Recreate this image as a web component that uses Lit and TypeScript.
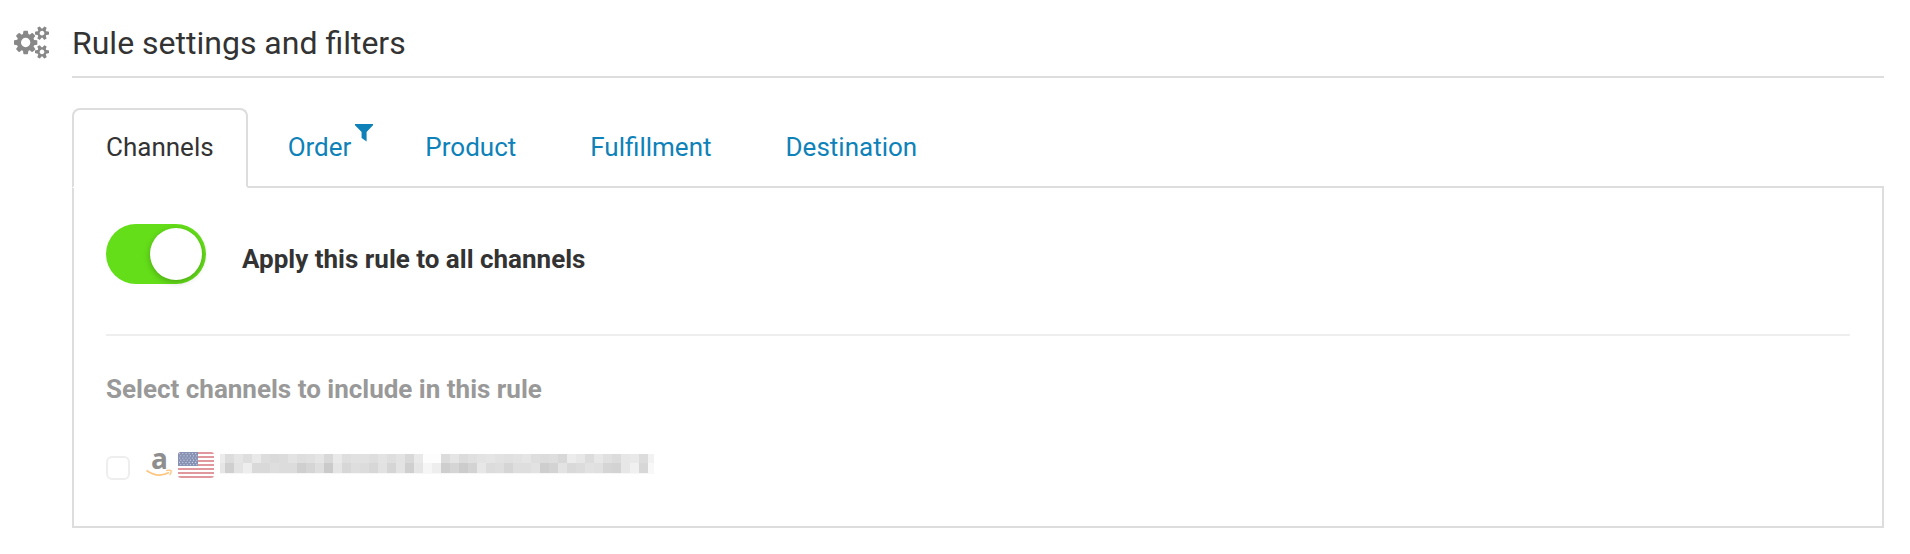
import { LitElement, html, svg, css } from "lit";
import { customElement, state } from "lit/decorators.js";

interface Tab {
  id: string;
  label: string;
  filtered?: boolean;
}

const TABS: Tab[] = [
  { id: "channels", label: "Channels" },
  { id: "order", label: "Order", filtered: true },
  { id: "product", label: "Product" },
  { id: "fulfillment", label: "Fulfillment" },
  { id: "destination", label: "Destination" },
];

// Grey levels (hex byte) of the redacted channel name, one row of blocks each.
const MASK_ROWS = [
  "ec dc e5 de e9 dd da dc e3 de e0 e5 d8 e9 de e1 e1 de e3 de e3 d8 e9 fd fd dc e5 dc e0 e3 e5 e2 e0 e2 e5 de dc de d8 ec e7 dc e7 e0 dc e7 e9 dc f2",
  "e6 cf e3 ee d9 d9 de dc dc cf d5 de ca e5 d7 de dc d7 e2 d5 e3 cf e5 f6 ee ce d5 cc d3 e7 dc de d5 de de e2 ce d3 e3 d9 dc e2 e0 d5 d3 e7 f0 d7 f8",
].map((row) => row.split(" "));
const MASK_CELL = 9;
const MASK_LEAD = 5;

@customElement("masked-name")
export class MaskedName extends LitElement {
  static styles = css`
    :host {
      display: block;
    }
    .mask {
      display: block;
    }
  `;

  render() {
    return html`<svg class="mask" width="434" height="20" viewBox="0 0 434 20" shape-rendering="crispEdges" aria-hidden="true">
      ${MASK_ROWS.map((row, r) =>
        row.map((level, i) => {
          const x = i === 0 ? 0 : MASK_LEAD + (i - 1) * MASK_CELL;
          const w = i === 0 ? MASK_LEAD : MASK_CELL;
          return svg`<rect x=${x} y=${r * MASK_CELL} width=${w} height=${r ? 10 : 9} fill=${"#" + level.repeat(3)}></rect>`;
        })
      )}
      <rect y="19" width="434" height="1" fill="#f7f7f7"></rect>
    </svg>`;
  }
}

@customElement("app-root")
export class AppRoot extends LitElement {
  @state() private active = "channels";
  @state() private allChannels = true;

  static styles = css`
    :host {
      display: block;
      color: #333;
      font-family: Roboto, "Liberation Sans", sans-serif;
      font-size: 26px;
      line-height: 36px;
    }
    .section {
      display: grid;
      grid-template-columns: 36px minmax(0, 1fr);
      column-gap: 22px;
      padding: 20px 26px 26px 14px;
    }
    .gears {
      display: block;
      margin-top: 6px;
      fill: #888;
    }
    .title {
      margin: 0 0 30px;
      padding: 1px 0 11px;
      border-bottom: 2px solid #ddd;
      font-size: 32px;
      font-weight: 400;
      line-height: 44px;
    }
    .tabs {
      display: flex;
      gap: 6px;
      border-bottom: 2px solid #ddd;
    }
    .tab {
      position: relative;
      margin: 0 0 -2px;
      padding: 19px 32px 21px;
      border: 2px solid transparent;
      border-radius: 8px 8px 0 0;
      background: none;
      color: #0e82b8;
      font: inherit;
      cursor: pointer;
    }
    .tab.active {
      border-color: #ddd #ddd #fff;
      background: #fff;
      color: #333;
    }
    .funnel {
      position: absolute;
      top: 14px;
      right: 10px;
      fill: currentColor;
    }
    .panel {
      padding: 36px 32px 46px;
      border: 2px solid #ddd;
      border-top: 0;
    }
    .apply {
      display: flex;
      align-items: center;
      gap: 36px;
      padding-bottom: 50px;
      border-bottom: 2px solid #eee;
    }
    .switch {
      appearance: none;
      flex: none;
      width: 100px;
      height: 60px;
      margin: 0;
      padding: 4px;
      border-radius: 30px;
      background: #ddd;
      cursor: pointer;
    }
    .switch::before {
      content: "";
      display: block;
      width: 52px;
      height: 52px;
      border-radius: 50%;
      background: #fff;
      box-shadow: 0 2px 6px rgba(0, 0, 0, 0.25);
    }
    .switch:checked {
      background: #64de19;
    }
    .switch:checked::before {
      margin-left: auto;
    }
    .apply-label {
      padding-top: 10px;
      font-weight: 700;
    }
    .channels {
      margin: 0;
      padding: 0;
      border: 0;
    }
    .legend {
      padding: 35px 0 0;
      color: #999;
      font-weight: 700;
    }
    .channel {
      display: flex;
      align-items: flex-start;
      margin-top: 45px;
    }
    .check {
      appearance: none;
      width: 24px;
      height: 24px;
      margin: 4px 16px 0 0;
      border: 2px solid #eee;
      border-radius: 6px;
      background: #fff;
    }
    .check:checked {
      background: #0e82b8;
    }
    .channel-label {
      display: flex;
      align-items: flex-start;
      gap: 6px;
    }
    .amazon {
      overflow: visible;
    }
    .amazon-a {
      fill: #8e8e8e;
      font-family: "Open Sans", sans-serif;
      font-size: 28px;
      font-weight: 700;
    }
    .masked {
      padding-top: 2px;
    }
  `;

  private renderTab(tab: Tab) {
    const selected = this.active === tab.id;
    return html`<button
      class="tab ${selected ? "active" : ""}"
      id="tab-${tab.id}"
      role="tab"
      aria-selected=${selected}
      aria-controls="panel"
      @click=${() => (this.active = tab.id)}
    >${tab.label}${tab.filtered
      ? html`<svg class="funnel" width="18" height="18" viewBox="0 0 18 18" aria-hidden="true">
          <path d="M0 0h18v1.3l-6.4 6.6V17.6L6.6 14V7.9L0 1.3z"></path>
        </svg>`
      : ""}</button>`;
  }

  private renderFlag() {
    return html`<svg width="36" height="26" viewBox="0 0 36 26" aria-label="United States" role="img">
      <defs><clipPath id="flag-shape"><rect width="36" height="26" rx="3"></rect></clipPath></defs>
      <g clip-path="url(#flag-shape)">
        <rect width="36" height="26" fill="#fff"></rect>
        ${[0, 1, 2, 3, 4, 5, 6].map((i) => svg`<rect y=${i * 4} width="36" height="2" fill="#e0979d"></rect>`)}
        <rect width="20" height="14" fill="#8791b3"></rect>
        ${[0, 1, 2, 3, 4, 5].map((r) =>
          [0, 1, 2, 3, 4, 5].map(
            (c) => svg`<circle cx=${1.6 + c * 3.2 + (r % 2) * 1.2} cy=${1.6 + r * 2.2} r="0.6" fill="#d3d8e6"></circle>`
          )
        )}
      </g>
    </svg>`;
  }

  render() {
    return html`
      <section class="section">
        <svg class="gears" width="35" height="33" viewBox="0 0 1920 1792" aria-hidden="true">
          <path d="M896 896q0-106-75-181t-181-75-181 75-75 181 75 181 181 75 181-75 75-181zm768 512q0-52-38-90t-90-38-90 38-38 90q0 53 37.5 90.5t90.5 37.5 90.5-37.5 37.5-90.5zm0-1024q0-52-38-90t-90-38-90 38-38 90q0 53 37.5 90.5t90.5 37.5 90.5-37.5 37.5-90.5zm-384 421v185q0 10-7 19.5t-16 10.5l-155 24q-11 35-32 76 34 48 90 115 7 11 7 20 0 12-7 19-23 30-82.5 89.5t-78.5 59.5q-11 0-21-7l-115-90q-37 19-77 31-11 108-23 155-7 24-30 24h-186q-11 0-20-7.5t-10-17.5l-23-153q-34-10-75-31l-118 89q-7 7-20 7-11 0-21-8-144-133-144-160 0-9 7-19 10-14 41-53t47-61q-23-44-35-82l-152-24q-10-1-17-9.5t-7-19.5v-185q0-10 7-19.5t16-10.5l155-24q11-35 32-76-34-48-90-115-7-11-7-20 0-12 7-20 22-30 82-89t79-59q11 0 21 7l115 90q34-18 77-32 11-108 23-154 7-24 30-24h186q11 0 20 7.5t10 17.5l23 153q34 10 75 31l118-89q8-7 20-7 11 0 21 8 144 133 144 160 0 8-7 19-12 16-42 54t-45 60q23 48 34 82l152 23q10 2 17 10.5t7 19.5zm640 533v140q0 16-149 31-12 27-30 52 51 113 51 138 0 4-4 7-122 71-124 71-8 0-46-47t-52-68q-20 2-30 2t-30-2q-14 21-52 68t-46 47q-2 0-124-71-4-3-4-7 0-25 51-138-18-25-30-52-149-15-149-31v-140q0-16 149-31 13-29 30-52-51-113-51-138 0-4 4-7 4-2 35-20t59-34 30-16q8 0 46 46.5t52 67.5q20-2 30-2t30 2q51-71 92-112l6-2q4 0 124 70 4 3 4 7 0 25-51 138 17 23 30 52 149 15 149 31zm0-1024v140q0 16-149 31-12 27-30 52 51 113 51 138 0 4-4 7-122 71-124 71-8 0-46-47t-52-68q-20 2-30 2t-30-2q-14 21-52 68t-46 47q-2 0-124-71-4-3-4-7 0-25 51-138-18-25-30-52-149-15-149-31v-140q0-16 149-31 13-29 30-52-51-113-51-138 0-4 4-7 4-2 35-20t59-34 30-16q8 0 46 46.5t52 67.5q20-2 30-2t30 2q51-71 92-112l6-2q4 0 124 70 4 3 4 7 0 25-51 138 17 23 30 52 149 15 149 31z"></path>
        </svg>
        <div>
          <h2 class="title">Rule settings and filters</h2>
          <div class="tabs" role="tablist">${TABS.map((tab) => this.renderTab(tab))}</div>
          <div class="panel" id="panel" role="tabpanel" aria-labelledby="tab-${this.active}">
            <div class="apply">
              <input
                class="switch"
                id="all-channels"
                type="checkbox"
                role="switch"
                .checked=${this.allChannels}
                @change=${(e: Event) => (this.allChannels = (e.target as HTMLInputElement).checked)}
              />
              <label class="apply-label" for="all-channels">Apply this rule to all channels</label>
            </div>
            <fieldset class="channels" ?disabled=${this.allChannels}>
              <legend class="legend">Select channels to include in this rule</legend>
              <div class="channel">
                <input class="check" id="channel-us" type="checkbox" aria-label="Amazon United States" />
                <label class="channel-label" for="channel-us">
                  <svg class="amazon" width="26" height="26" viewBox="0 0 26 26" role="img" aria-label="Amazon">
                    <text class="amazon-a" x="13.5" y="17" text-anchor="middle">a</text>
                    <path d="M.5 18.5Q12 26.500 23 20.500" fill="none" stroke="#fdc680" stroke-width="1.700"></path>
                    <path d="M20.200 18.600Q24 17.600 25.200 18.800 25.600 20.800 23.600 23.200" fill="none" stroke="#fdc680" stroke-width="1.300"></path>
                  </svg>
                  ${this.renderFlag()}
                  <masked-name class="masked"></masked-name>
                </label>
              </div>
            </fieldset>
          </div>
        </div>
      </section>
    `;
  }
}
